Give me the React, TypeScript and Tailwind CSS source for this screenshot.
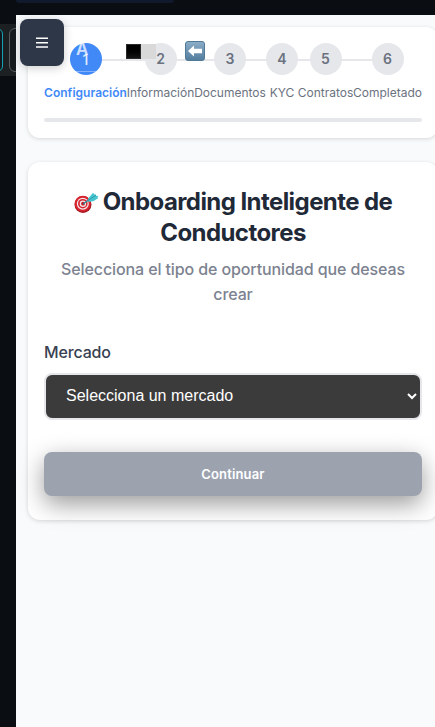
import React from "react";

const steps = [
  { n: "1", label: "Configuración", cell: "w-[83px]", active: true },
  { n: "2", label: "Información", cell: "w-[67px]" },
  { n: "3", label: "Documentos", cell: "w-[72px]" },
  { n: "4", label: "KYC", cell: "w-8" },
  { n: "5", label: "Contratos", cell: "w-[55px]" },
  { n: "6", label: "Completado", cell: "w-[69px]" },
];

function Target() {
  return (
    <svg width="26" height="24" viewBox="0 0 26 24" className="shrink-0">
      <ellipse cx="9" cy="14.5" rx="8.5" ry="8.5" fill="#a31721" />
      <circle cx="8.7" cy="13.7" r="8" fill="#d9232f" />
      <circle cx="8.8" cy="13.7" r="6" fill="#f4e9e9" />
      <circle cx="8.8" cy="13.7" r="4.8" fill="#d52632" />
      <circle cx="8.9" cy="13.7" r="3.2" fill="#f4e9e9" />
      <circle cx="9" cy="13.7" r="1.9" fill="#c51624" />
      <path d="M9 14 19 7" stroke="#278c98" strokeWidth="1.3" />
      <path d="m14 8.8 5-6 1.6 2 .5-1.2.8 2.2 2.8.2-1.3 1 .7 1.2-4.4 2.7-5 1Z" fill="#45c5d0" />
      <path d="m14 10.5 8-5.3" stroke="#258895" strokeWidth=".7" />
    </svg>
  );
}

export default function App() {
  return (
    <div className="relative h-[727px] w-[435px] overflow-hidden bg-[#0a0d12] font-['Inter',sans-serif]">
      <div className="absolute left-4 top-0 h-[3px] w-[158px] rounded-b-md bg-[#111a2d]" />
      <div className="absolute left-0 top-6 h-[52px] w-4 bg-[#1c2023]">
        <div className="absolute -left-3 top-1 h-11 w-[15px] rounded-md border border-[#18a1b2] bg-[#11171b]" />
        <div className="absolute left-[9px] top-1 h-11 w-5 rounded-md border border-[#555b5f] bg-[#171b1e]" />
      </div>

      <main className="relative ml-4 mt-[15px] h-[712px] overflow-hidden bg-[#f9fafc] pl-3 pt-3">
        <section className="h-[111px] w-[410px] rounded-xl bg-white px-4 pt-4 shadow-[0_1px_4px_rgba(0,0,0,0.14)]">
          <div className="relative flex">
            <div className="absolute left-[42px] top-4 h-[2px] w-[302px] bg-[#e5e7eb]" />
            {steps.map((s) => (
              <div key={s.n} className={`relative flex shrink-0 flex-col items-center ${s.cell}`}>
                <div className={`flex size-8 items-center justify-center rounded-full text-sm ${s.active ? "bg-[#4289f8] pt-px font-medium text-white/85" : "bg-[#e5e7eb] font-semibold text-[#6b7280]"}`}>
                  {s.n}
                </div>
                <span className={`mt-[9px] whitespace-nowrap text-[12px] leading-[18px] ${s.active ? "font-semibold tracking-[0.03px] text-[#4289f8]" : "text-[#6b7280]"}`}>{s.label}</span>
              </div>
            ))}
            <span className="absolute left-[32px] top-[-4px] text-[17px] font-semibold leading-5 text-white/75">A</span>
            <div className="absolute left-[30px] top-7 h-px w-6 bg-white/35" />
            <div className="absolute left-[82px] top-[1px] flex">
              <div className="size-[15px] border border-[#292929] bg-linear-to-b from-black to-[#151515]" />
              <div className="size-[15px] bg-[#d9d9d9]" />
            </div>
            <svg className="absolute left-[141px] top-[-2px]" width="20" height="20" viewBox="0 0 20 20">
              <defs><linearGradient id="sky" x2="0" y2="1"><stop stopColor="#8caec8" /><stop offset="1" stopColor="#527c9d" /></linearGradient></defs>
              <rect x=".5" y=".5" width="19" height="19" rx="2.5" fill="url(#sky)" stroke="#527995" />
              <path d="m3 10 6-5.5v3.2h8v4.6H9v3.2Z" fill="#fff" />
            </svg>
          </div>
          <div className="mt-4 h-1 rounded-full bg-[#e5e7eb]" />
        </section>

        <section className="mt-6 h-[358px] w-[410px] rounded-xl bg-white px-4 pt-6 shadow-[0_1px_4px_rgba(0,0,0,0.14)]">
          <h1 className="flex flex-col items-center whitespace-nowrap text-[24px] font-bold leading-[31px] tracking-[-0.57px] text-[#1f2937]">
            <span className="flex items-center gap-[3px]">
              <Target />
              <span>Onboarding Inteligente de</span>
            </span>
            <span>Conductores</span>
          </h1>
          <p className="mt-[9px] whitespace-nowrap text-center text-[16px] font-medium leading-[25px] tracking-[-0.11px] text-[#7c8290]">
            Selecciona el tipo de oportunidad que deseas<br />crear
          </p>
          <label className="mt-[33px] block text-[16px] font-medium leading-6 tracking-[-0.15px] text-[#374151]">Mercado</label>
          <button className="mt-[9px] flex h-[47px] w-full items-center justify-between rounded-lg border-2 border-[#e5e7eb] bg-[#3b3b3b] pb-px pl-5 pr-[3px] font-['Liberation_Sans',sans-serif] text-[16px] text-white">
            <span>Selecciona un mercado</span>
            <svg width="10" height="8" viewBox="0 0 10 8" fill="none"><path d="m1 2 4 4 4-4" stroke="currentColor" strokeWidth="2" /></svg>
          </button>
          <button className="mt-8 flex h-11 w-full items-center justify-center rounded-lg bg-[#9ca3af] pt-px text-[13px] font-semibold tracking-[0.15px] text-white shadow-[0_8px_25px_rgba(0,0,0,0.4)]">
            Continuar
          </button>
        </section>
      </main>

      <button aria-label="Menú" className="absolute left-5 top-[19px] flex h-[47px] w-11 items-center justify-center rounded-lg bg-[#2d3748] text-white shadow-[0_2px_10px_rgba(0,0,0,0.2)]">
        <svg width="12" height="11" viewBox="0 0 12 11"><path d="M0 1.3h12M0 5.7h12M0 10.1h12" stroke="currentColor" strokeWidth="1.5" /></svg>
      </button>
    </div>
  );
}
